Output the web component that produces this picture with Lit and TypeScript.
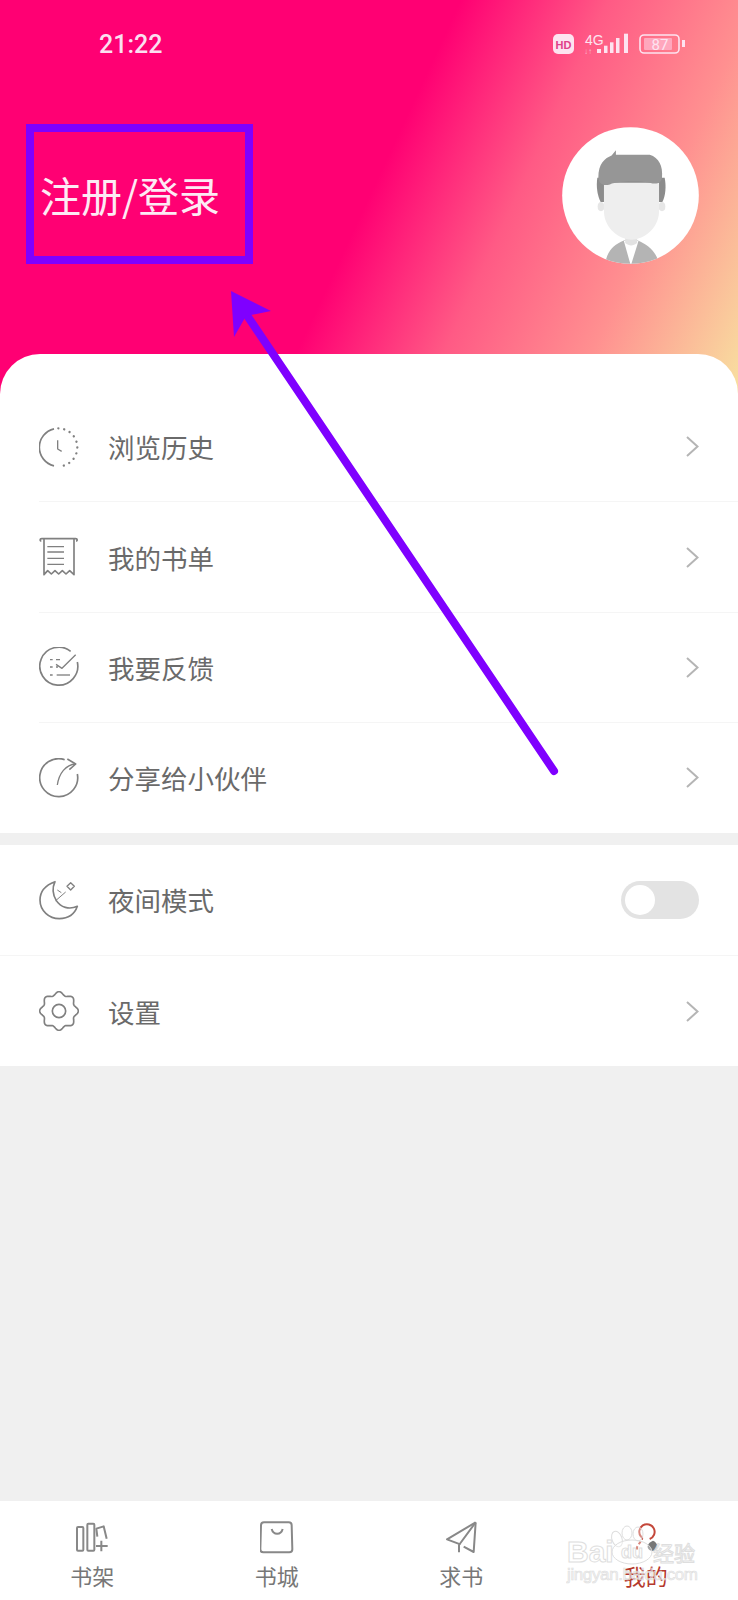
import { LitElement, html, css, svg } from 'lit';
import { customElement, property } from 'lit/decorators.js';

const gearPath = () => {
  const pts: string[] = [];
  for (let i = 0; i < 160; i++) {
    const a = (i / 160) * Math.PI * 2;
    const r = 53 + 5 * Math.cos(8 * a);
    pts.push(`${(114 + r * Math.cos(a)).toFixed(1)} ${(570 + r * Math.sin(a)).toFixed(1)}`);
  }
  return `M${pts.join('L')}Z`;
};

const ICONS: Record<string, { box: string; body: unknown }> = {
  clock: {
    box: '55 52 120 120',
    body: svg`
      <path d="M100 57.500A57 57 0 0 0 100 168.500"/>
      <path d="M113 56A57 57 0 0 1 113 170" stroke-dasharray="0.1 17.800" stroke-linecap="round" stroke-width="7"/>
      <path d="M111 92V118L123 125" stroke-width="4"/>`,
  },
  receipt: {
    box: '55 382 120 120',
    body: svg`
      <path d="M62 394C57 394 57 387 63 387H165C171 387 171 394 166 394"/>
      <path d="M70 388V495L81 483L92 493L103 483L114 493L125 483L136 493L147 483L160 495V388"/>
      <path d="M80 411H130M80 427H130M80 446H130M80 464H130" stroke-width="4"/>`,
  },
  feedback: {
    box: '55 712 120 120',
    body: svg`
      <path d="M150 725A57 57 0 1 0 170 757"/>
      <path d="M106 764L124 776L165 735" stroke-width="4"/>
      <path d="M88 750H96M106 750H118M88 772H96M106 772H112M88 796H96" stroke-width="4"/>
      <path d="M108 796H148" stroke-width="4"/>`,
  },
  share: {
    box: '55 1044 120 120',
    body: svg`
      <path d="M132 1049A57 57 0 1 0 170 1092"/>
      <path d="M140 1047L165 1062L146 1079"/>
      <path d="M165 1062C135 1064 115 1090 110 1125" stroke-width="4"/>`,
  },
  moon: {
    box: '55 178 120 120',
    body: svg`
      <path d="M103 183C70 195 58 215 58 238C58 270 85 294 116 294C142 294 162 280 170 257C145 268 120 260 107 240C95 220 95 200 103 183Z"/>
      <path d="M105 240L135 214M110 208L122 216" stroke-width="3"/>
      <path d="M150 186L161 197L150 208L139 197Z" stroke-width="4"/>`,
  },
  gear: {
    box: '54 510 120 120',
    body: svg`
      <path d=${gearPath()}/>
      <circle cx="114" cy="570" r="20"/>`,
  },
  shelf: {
    box: '225 93 102 99',
    body: svg`
      <rect x="231" y="111" width="19" height="71" rx="3"/>
      <rect x="262" y="101" width="21" height="81" rx="3"/>
      <path d="M292 140L289 116L311 109L320 146"/>
      <path d="M304 152V184M288 168H323"/>`,
  },
  shop: {
    box: '780 93 102 99',
    body: svg`
      <path d="M792 97H866C872 97 875 100 875 106L877 178C877 184 874 187 868 187H790C784 187 781 184 781 178L783 106C783 100 786 97 792 97Z"/>
      <path d="M815 117C820 136 843 136 848 117"/>`,
  },
  send: {
    box: '223 93 102 99',
    body: svg`
      <path d="M318 97L232 148L272 163"/>
      <path d="M318 97L312 186L282 170"/>
      <path d="M318 97L268 165V187"/>`,
  },
  mine: {
    box: '776 93 102 99',
    body: svg`
      <path d="M812 140A23 23 0 1 1 838 147" stroke="#c4473a"/>
      <path d="M812 140C822 146 808 155 800 172V186" stroke="#c4473a" stroke-dasharray="10 7"/>
      <path d="M848 152C862 158 866 172 852 182C840 186 830 176 832 168C834 160 840 155 848 152Z" fill="#777" stroke="none"/>`,
  },
};

@customElement('line-icon')
export class LineIcon extends LitElement {
  static styles = css`
    :host {
      display: block;
      width: 40px;
      height: 40px;
    }

    svg {
      display: block;
      width: 100%;
      height: 100%;
      fill: none;
      stroke: var(--icon-color, #808080);
      stroke-width: var(--icon-stroke, 5);
      stroke-linejoin: round;
    }
  `;

  @property({ type: String })
  name = '';

  render() {
    const icon = ICONS[this.name];
    return html`<svg viewBox=${icon.box}>${icon.body}</svg>`;
  }
}

@customElement('app-root')
export class AppRoot extends LitElement {
  static styles = css`
    :host {
      display: block;
      width: 738px;
      height: 1600px;
      overflow: hidden;
      position: relative;
      background: #f0f0f0;
      font-family: "Noto Sans CJK SC", "Noto Sans", sans-serif;
    }

    .page {
      height: 1600px;
      display: flex;
      flex-direction: column;
    }

    .header {
      height: 394px;
      flex: none;
      box-sizing: border-box;
      padding: 32px 39px 0 40px;
      color: #fff;
      background: linear-gradient(115deg, #ff0073 0%, #ff0073 50%, #ff5a85 66%, #ff9090 82%, #f8e0a0 100%);
    }

    .status {
      height: 24px;
      display: flex;
      align-items: center;
      justify-content: space-between;
      padding: 0 14px 0 59px;
    }

    .time {
      font-family: Roboto, sans-serif;
      font-size: 25px;
      font-weight: 500;
      color: #fbdff0;
    }

    .status-icons {
      width: 132px;
      height: 22px;
    }

    .profile {
      display: flex;
      align-items: center;
      justify-content: space-between;
      margin-top: 71px;
    }

    .login {
      font-size: 41px;
      line-height: 50px;
      margin-bottom: 4px;
      color: #fdeaf4;
    }

    .avatar {
      width: 137px;
      height: 137px;
      display: block;
    }

    .card {
      background: #fff;
      flex: none;
    }

    .card.first {
      margin-top: -40px;
      padding-top: 38px;
      border-radius: 40px 40px 0 0;
    }

    .card.second {
      margin-top: 12px;
    }

    .row {
      height: 109.400px;
      box-sizing: border-box;
      display: flex;
      align-items: center;
      padding: 0 39px;
      gap: 29px;
      font-size: 26.500px;
      color: #6a6a6a;
    }

    .second .row {
      height: 110.400px;
    }

    .divider {
      height: 1px;
      background: #f5f5f5;
    }

    .first .divider {
      margin-left: 39px;
    }

    .label {
      flex: 1;
    }

    .chevron {
      width: 13px;
      height: 21px;
      fill: none;
      stroke: #b5b5b5;
      stroke-width: 2;
    }

    .toggle {
      width: 78px;
      height: 38px;
      box-sizing: border-box;
      padding: 4px;
      border-radius: 19px;
      background: #e3e3e3;
    }

    .knob {
      width: 30px;
      height: 30px;
      border-radius: 50%;
      background: #fff;
    }

    .tabs {
      margin-top: auto;
      height: 99px;
      flex: none;
      display: grid;
      grid-template-columns: repeat(4, 1fr);
      background: #fff;
    }

    .tab {
      display: flex;
      flex-direction: column;
      align-items: center;
      padding-top: 20px;
      font-size: 22px;
      line-height: 30px;
      color: #777;
      --icon-color: #888;
      --icon-stroke: 6;
    }

    .tab line-icon {
      width: 34px;
      height: 33px;
      margin-bottom: 6px;
    }

    .tab.active {
      color: #b5392c;
    }

    .annotation {
      position: absolute;
      left: 0;
      top: 0;
      width: 738px;
      height: 1600px;
      pointer-events: none;
    }

    .mark {
      position: absolute;
      left: 26px;
      top: 124px;
      width: 227px;
      height: 140px;
      box-sizing: border-box;
      border: 8px solid #7f00ff;
    }

    .watermark {
      position: absolute;
      left: 566px;
      top: 1525px;
      width: 134px;
      height: 60px;
      fill: rgba(255, 255, 255, 0.35);
      stroke: #dedede;
      stroke-width: 1;
    }

    .wm-latin {
      font-family: "Liberation Sans", sans-serif;
      font-weight: 700;
    }

    .wm-cjk {
      font-family: "Noto Sans CJK SC", sans-serif;
      font-size: 21px;
    }

    .wm-url {
      font-family: "Liberation Sans", sans-serif;
      font-size: 17px;
      stroke-width: 0.6;
      fill: rgba(230, 230, 230, 0.5);
    }
  `;

  private menu = [
    { icon: 'clock', label: '浏览历史' },
    { icon: 'receipt', label: '我的书单' },
    { icon: 'feedback', label: '我要反馈' },
    { icon: 'share', label: '分享给小伙伴' },
  ];

  private tabs = [
    { icon: 'shelf', label: '书架' },
    { icon: 'shop', label: '书城' },
    { icon: 'send', label: '求书' },
    { icon: 'mine', label: '我的', active: true },
  ];

  private chevron() {
    return html`<svg class="chevron" viewBox="0 0 13 21"><path d="M1 1L11.500 10.500L1 20"/></svg>`;
  }

  private statusIcons() {
    return html`
      <svg class="status-icons" viewBox="0 0 132 22">
        <rect x="0" y="1" width="21" height="20" rx="5" fill="#fde3f0"/>
        <text x="10.500" y="15.500" text-anchor="middle" font-family="Liberation Sans" font-weight="700" font-size="11" fill="#e0408a">HD</text>
        <text x="32" y="12" font-family="Liberation Sans" font-size="14" fill="#fde3f0">4G</text>
        <text x="31" y="21" font-family="Liberation Sans" font-size="8" fill="#fbb5d0">↓↑</text>
        <g fill="#fde3f0">
          <rect x="44" y="16" width="4" height="4"/>
          <rect x="51" y="12.700" width="3.500" height="7.300"/>
          <rect x="57" y="9.300" width="3.500" height="10.700"/>
          <rect x="63" y="5" width="3.500" height="15"/>
          <rect x="71" y="0.700" width="4" height="19.300"/>
        </g>
        <rect x="87" y="2" width="39" height="18" rx="4" fill="none" stroke="#fde3f0" stroke-width="1.600"/>
        <rect x="91" y="5" width="28" height="12" rx="1" fill="#ffa7bd"/>
        <text x="107" y="16.500" text-anchor="middle" font-family="Roboto" font-size="15" fill="#fde3f0">87</text>
        <rect x="129" y="7" width="3" height="7" fill="#fde3f0"/>
      </svg>
    `;
  }

  private avatar() {
    return html`
      <svg class="avatar" viewBox="36 22 412 413">
        <defs><clipPath id="round"><circle cx="242" cy="228.500" r="206"/></clipPath></defs>
        <circle cx="242" cy="228.500" r="206" fill="#fff"/>
        <g clip-path="url(#round)">
          <path d="M165 440C170 395 190 378 222 364H264C295 378 320 395 330 440Z" fill="#b4b4b4"/>
          <path d="M222 366L243 440L266 366Z" fill="#fff"/>
          <path d="M226 345H262V372C250 382 238 382 226 372Z" fill="#e2e2e2"/>
          <path d="M142 175C138 200 142 230 152 248H338C348 230 350 200 345 175Z" fill="#8c8c8c"/>
          <ellipse cx="153" cy="262" rx="10" ry="14" fill="#e6e6e6"/>
          <ellipse cx="337" cy="262" rx="10" ry="14" fill="#e6e6e6"/>
          <path d="M162 190V280C165 330 210 362 245 362C280 362 325 330 328 280V190Z" fill="#eee"/>
          <path d="M145 175C145 132 165 116 185 108L198 92V106H300C328 115 340 140 337 175C335 192 320 196 300 190C260 183 205 185 180 195C160 200 147 195 145 175Z" fill="#969696"/>
        </g>
      </svg>
    `;
  }

  private watermark() {
    return html`
      <svg class="watermark" viewBox="0 0 134 60">
        <text class="wm-latin" x="1" y="37" font-size="30">Bai</text>
        <ellipse cx="51" cy="14" rx="5" ry="8" transform="rotate(-20 51 14)"/>
        <ellipse cx="61" cy="8" rx="5" ry="7"/>
        <ellipse cx="72" cy="9" rx="5" ry="7"/>
        <ellipse cx="66" cy="27" rx="20" ry="12"/>
        <text class="wm-latin" x="55" y="33" font-size="18">du</text>
        <text class="wm-cjk" x="87" y="36">经验</text>
        <text class="wm-url" x="1" y="55" textLength="131">jingyan.baidu.com</text>
      </svg>
    `;
  }

  render() {
    return html`
      <div class="page">
        <div class="header">
          <div class="status">
            <span class="time">21:22</span>
            ${this.statusIcons()}
          </div>
          <div class="profile">
            <span class="login">注册/登录</span>
            ${this.avatar()}
          </div>
        </div>

        <div class="card first">
          ${this.menu.map((item, i) => html`
            ${i ? html`<div class="divider"></div>` : ''}
            <div class="row">
              <line-icon name=${item.icon}></line-icon>
              <span class="label">${item.label}</span>
              ${this.chevron()}
            </div>
          `)}
        </div>

        <div class="card second">
          <div class="row">
            <line-icon name="moon"></line-icon>
            <span class="label">夜间模式</span>
            <div class="toggle"><div class="knob"></div></div>
          </div>
          <div class="divider"></div>
          <div class="row">
            <line-icon name="gear"></line-icon>
            <span class="label">设置</span>
            ${this.chevron()}
          </div>
        </div>

        <div class="tabs">
          ${this.tabs.map((tab) => html`
            <div class="tab ${tab.active ? 'active' : ''}">
              <line-icon name=${tab.icon}></line-icon>
              <span>${tab.label}</span>
            </div>
          `)}
        </div>
      </div>

      ${this.watermark()}

      <div class="mark"></div>
      <svg class="annotation" viewBox="0 0 738 1600">
        <path d="M554 771L240 305" stroke="#7f00ff" stroke-width="8" stroke-linecap="round" fill="none"/>
        <path d="M231 291L271 311L246 316L234 337Z" fill="#7f00ff"/>
      </svg>
    `;
  }
}

declare global {
  interface HTMLElementTagNameMap {
    'app-root': AppRoot;
    'line-icon': LineIcon;
  }
}
